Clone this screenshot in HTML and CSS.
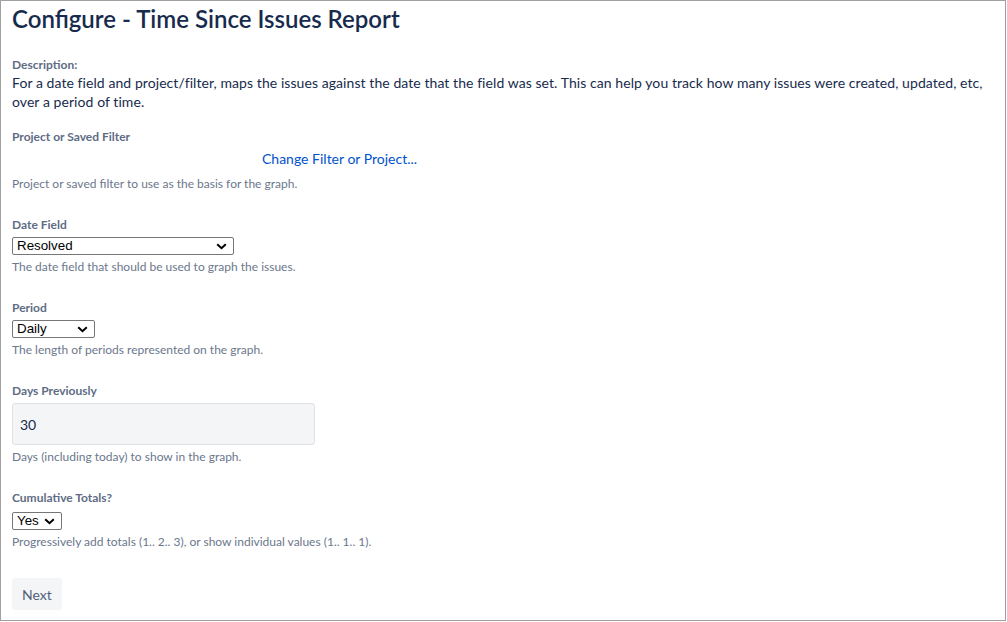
FILE: index.html
```html
<!DOCTYPE html>
<html lang="en">
<head>
    <meta charset="UTF-8">
    <title>Configure - Time Since Issues Report</title>
    <link rel="stylesheet" href="styles.css">
</head>
<body>
    <div class="frame">
        <h1>Configure - Time Since Issues Report</h1>

        <div class="description">
            <div class="label">Description:</div>
            <p>For a date field and project/filter, maps the issues against the date that the field was set. This can help you track how many issues were created, updated, etc, over a period of time.</p>
        </div>

        <form class="report-form">
            <div class="field">
                <label class="label">Project or Saved Filter</label>
                <div class="filter-link"><a href="#">Change Filter or Project...</a></div>
                <div class="help help--link">Project or saved filter to use as the basis for the graph.</div>
            </div>

            <div class="field">
                <label class="label" for="dateField">Date Field</label>
                <select id="dateField" class="select select--wide">
                    <option>Resolved</option>
                    <option>Created</option>
                    <option>Updated</option>
                </select>
                <div class="help">The date field that should be used to graph the issues.</div>
            </div>

            <div class="field">
                <label class="label" for="period">Period</label>
                <select id="period" class="select select--period">
                    <option>Daily</option>
                    <option>Weekly</option>
                    <option>Monthly</option>
                </select>
                <div class="help">The length of periods represented on the graph.</div>
            </div>

            <div class="field">
                <label class="label" for="days">Days Previously</label>
                <input id="days" class="text-input" type="text" value="30">
                <div class="help">Days (including today) to show in the graph.</div>
            </div>

            <div class="field">
                <label class="label" for="cumulative">Cumulative Totals?</label>
                <select id="cumulative" class="select select--short">
                    <option>Yes</option>
                    <option>No</option>
                </select>
                <div class="help">Progressively add totals (1.. 2.. 3), or show individual values (1.. 1.. 1).</div>
            </div>

            <button type="button" class="btn">Next</button>
        </form>
    </div>
</body>
</html>
```

FILE: styles.css
```css
html{
    font-family: 'Lato', 'Open Sans', sans-serif;
}

*,
*:before,
*:after{
    box-sizing: border-box;
}

body{
    margin: 0;
    padding: 0;
    background: #fff;
    color: #172b4d;
}

.frame{
    width: 1006px;
    height: 621px;
    border: 1px solid #a0a0a0;
    padding: 3px 11px 0;
    overflow: hidden;
}

h1{
    margin: 0;
    font-size: 24px;
    font-weight: 600;
    line-height: 30px;
    color: #172b4d;
}

.label{
    display: block;
    font-size: 12px;
    font-weight: 700;
    color: #5e6c84;
    line-height: 16px;
}

.description{
    margin-top: 23px;
}

.description p{
    margin: 0;
    font-size: 14px;
    line-height: 19px;
    letter-spacing: 0.07px;
}

.report-form{
    margin-top: 18px;
}

.field + .field{
    margin-top: 25px;
}

.filter-link{
    padding-left: 250px;
    margin-top: 4px;
    font-size: 14px;
    line-height: 20px;
}

.filter-link a{
    color: #0052cc;
    text-decoration: none;
}

.help{
    margin-top: 4px;
    font-size: 12px;
    line-height: 16px;
    color: #6b778c;
}

.help--link{
    margin-top: 7px;
}

.select{
    display: block;
    margin-top: 4px;
    height: 18px;
    padding: 0 20px 0 4px;
    font-family: Arial, 'Liberation Sans', sans-serif;
    font-size: 13.33px;
    line-height: 16px;
    color: #000;
    background: #fff url("data:image/svg+xml;utf8,<svg xmlns='http://www.w3.org/2000/svg' width='11' height='7' viewBox='0 0 11 7'><polyline points='1.2,1.2 5.5,5.2 9.8,1.2' fill='none' stroke='black' stroke-width='2'/></svg>") no-repeat right 6px center;
    border: 1px solid #767676;
    border-radius: 2px;
    appearance: none;
    -webkit-appearance: none;
}

.select--wide{
    width: 222px;
}

.select--period{
    width: 83px;
}

.select--short{
    width: 50px;
    margin-top: 6px;
}

.text-input{
    display: block;
    margin-top: 4px;
    width: 303px;
    height: 42px;
    padding: 0 7px;
    font-family: inherit;
    font-size: 14px;
    color: #172b4d;
    background: #f4f5f7;
    border: 1px solid #dfe1e6;
    border-radius: 3px;
}

.btn{
    display: block;
    margin-top: 28px;
    padding: 0 10px;
    height: 32px;
    font-family: inherit;
    font-size: 14px;
    color: #505f79;
    background: #f4f5f7;
    border: none;
    border-radius: 3px;
}
```
